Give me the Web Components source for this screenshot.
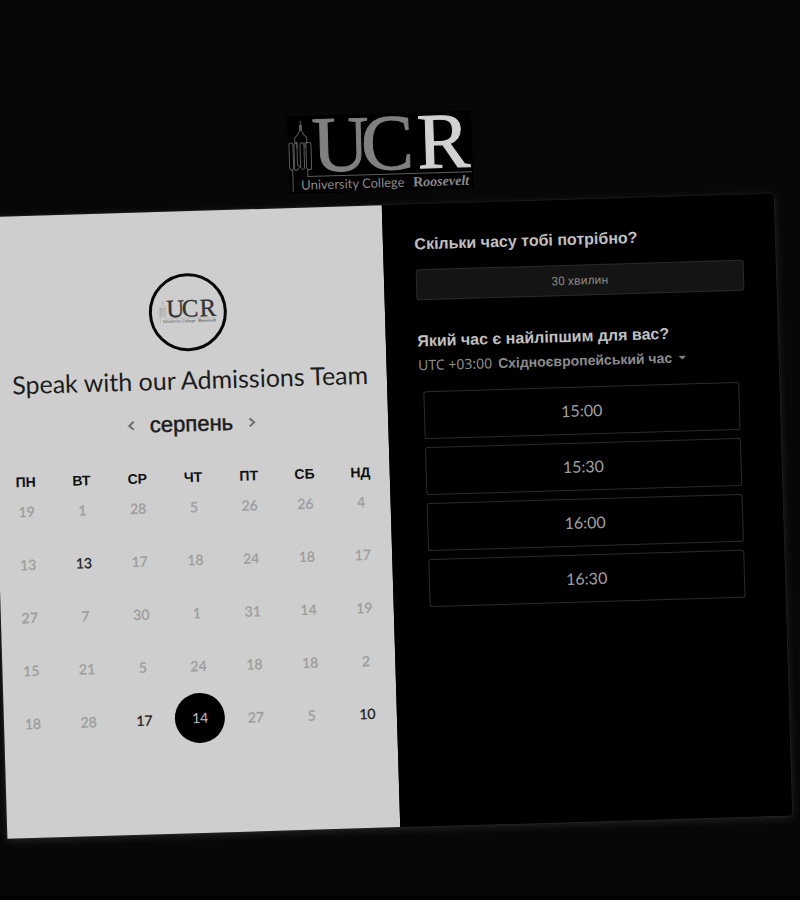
<!DOCTYPE html>
<html lang="uk">
<head>
<meta charset="utf-8">
<meta name="viewport" content="width=device-width, initial-scale=1">
<title>Speak with our Admissions Team</title>
<style>
html { background: #000; }
body { margin: 0; overflow-x: hidden; font-family: "Liberation Sans", sans-serif; }
</style>
</head>
<body>
<booking-page>
  <ucr-logo slot="brand"></ucr-logo>
  <date-panel heading="Speak with our Admissions Team" month="серпень"></date-panel>
  <time-panel></time-panel>
</booking-page>

<script>
const define = (name, html, setup) => customElements.define(name, class extends HTMLElement {
  constructor() {
    super();
    this.attachShadow({ mode: "open" }).innerHTML = html;
  }
  connectedCallback() { if (setup) setup(this, this.shadowRoot); }
});

define("ucr-logo", `
<style>
:host { display: block; width: 184px; --plate: #000; --uc: #808080; --r: #d2d2d2; --sub: #8a8a8a; --line: #5c5c5c; }
svg { display: block; width: 100%; overflow: visible; }
.serif { font-family: "Liberation Serif", serif; font-size: 79px; }
.sub { font-family: Lato, sans-serif; font-size: 13px; fill: var(--sub); }
.name { font-family: "Liberation Serif", serif; font-size: 14px; font-weight: 700; fill: var(--sub); }
</style>
<svg viewBox="0 -18 184 96" role="img" aria-label="University College Roosevelt">
  <rect width="184" height="78" fill="var(--plate)"/>
  <g fill="none" stroke="var(--line)" stroke-width="1">
    <path d="M13 5v10M12 9v6M14 9v6M12 15l-2 4-3 3v5h2v5M14 15l2 4 3 3v5h-2v5"/>
    <rect x="1" y="27" width="4" height="27" rx="2"/>
    <path d="M6 30q0-3 3-3v22l3 3v-22q0-3 2-3t2 3v21q0 4-3 2M6 30v24q2 2 4-2"/>
    <rect x="18" y="27" width="5" height="27" rx="2"/>
    <path d="M3 54l1 2v20M19 54v7h164"/>
  </g>
  <g class="serif">
    <text x="24" y="56" fill="var(--uc)" stroke="var(--uc)" stroke-width="1">U</text>
    <text x="73" y="56" fill="var(--uc)" stroke="var(--uc)" stroke-width="1">C</text>
    <text x="129" y="56" fill="var(--r)" stroke="var(--r)" stroke-width="1">R</text>
  </g>
  <text class="sub" x="12" y="74">University College</text>
  <text class="name" x="124" y="74">R<tspan font-style="italic">oosevelt</tspan></text>
</svg>`);

define("booking-page", `
<style>
:host { display: block; box-sizing: border-box; min-height: calc(100vh - 4px); background: #070707; overflow: hidden; }
.scene { padding: 95px 17px 60px 0; margin-left: -2px; transform: rotate(-1.7deg); transform-origin: 50% 516px; }
header { display: flex; justify-content: center; }
main { display: grid; grid-template-columns: 1fr 1fr; margin-top: 14px; background: #000;
  border-radius: 0 3px 3px 0; box-shadow: 0 2px 10px rgba(255,255,255,.13), 0 0 2px rgba(255,255,255,.13); }
</style>
<div class="scene">
  <header><slot name="brand"></slot></header>
  <main><slot></slot></main>
</div>`);

define("host-avatar", `
<style>
:host { display: flex; justify-content: center; box-sizing: border-box; padding-top: 17px;
  width: 78px; height: 78px; border: 3px solid #080808; border-radius: 50%; }
ucr-logo { width: 58px; --plate: none; --uc: #333; --r: #333; --sub: #555; --line: #888; }
</style>
<ucr-logo></ucr-logo>`);

define("date-panel", `
<style>
:host { display: flex; flex-direction: column; align-items: center; background: #cecece; color: #1c1c1c;
  padding: 62px 0 81px; min-width: 0; }
h1 { margin: 12px 0 17px; font: 400 25px/32px Lato, sans-serif; white-space: nowrap; }
nav { display: flex; align-items: center; gap: 11px; height: 24px; margin-bottom: 31px; }
h2 { margin: 0; font: 400 22px/24px "Liberation Sans", sans-serif; -webkit-text-stroke: 0.5px #1c1c1c; }
button { border: 0; padding: 0; background: none; color: inherit; cursor: pointer; }
nav button { display: grid; place-items: center; width: 16px; height: 24px; color: #707070; }
nav svg { width: 8px; height: 12px; fill: none; stroke: currentColor; stroke-width: 2; }
table { width: calc(100% - 2px); table-layout: fixed; border-collapse: collapse; }
th { height: 20px; padding: 0; font: 700 14px/20px "Liberation Sans", sans-serif; color: #101010; }
td { height: 53px; padding: 0; vertical-align: top; text-align: center; }
td button { display: block; width: 40px; height: 40px; margin: 0 auto; border-radius: 50%;
  font: 400 14px/20px Lato, sans-serif; color: #1c1c1c; -webkit-text-stroke: 0.3px currentColor; }
td button:disabled { color: #9c9c9c; cursor: default; }
td button[aria-pressed=true] { width: 50px; height: 50px; margin: -6px auto; background: #000; color: #bdbdbd; -webkit-text-stroke: 0; }
</style>
<host-avatar></host-avatar>
<h1></h1>
<nav aria-label="Місяць">
  <button type="button" aria-label="Попередній"><svg viewBox="0 0 8 12"><path d="M6.500 2L2 6l4.500 4"/></svg></button>
  <h2></h2>
  <button type="button" aria-label="Наступний"><svg viewBox="0 0 8 12"><path d="M1.500 2L6 6l-4.500 4"/></svg></button>
</nav>
<table><thead><tr></tr></thead><tbody></tbody></table>`,
(host, root) => {
  root.querySelector("h1").textContent = host.getAttribute("heading");
  root.querySelector("h2").textContent = host.getAttribute("month");
  root.querySelector("thead tr").innerHTML =
    ["ПН", "ВТ", "СР", "ЧТ", "ПТ", "СБ", "НД"].map(d => `<th scope="col">${d}</th>`).join("");
  /* "+" marks an open day, "*" the chosen one */
  const weeks = ["19 1 28 5 26 26 4", "13 13+ 17 18 24 18 17", "27 7 30 1 31 14 19", "15 21 5 24 18 18 2", "18 28 17+ 14* 27 5 10+"];
  root.querySelector("tbody").innerHTML = weeks.map(w => "<tr>" + w.split(" ").map(d => {
    const state = d.endsWith("*") ? 'aria-pressed="true"' : d.endsWith("+") ? "" : "disabled";
    return `<td><button type="button" ${state}>${parseInt(d)}</button></td>`;
  }).join("") + "</tr>").join("");
});

define("time-slot", `
<style>
:host { display: block; }
button { display: block; width: 100%; height: 48px; padding: 0; border: 1px solid #2b2b2b; border-radius: 3px;
  background: #000; color: #a0a0a0; font: 400 16px/24px Lato, sans-serif; cursor: pointer; }
</style>
<button type="button"><slot></slot></button>`);

define("time-panel", `
<style>
:host { display: block; background: #000; color: #c0c0c0; padding: 30px 32px 29px 32px; min-width: 0; border-radius: 0 3px 3px 0; }
h2 { margin: 0; font: 700 16px/20px "Liberation Sans", sans-serif; }
.duration { display: block; width: 100%; height: 31px; margin: 15px 0 31px; padding: 0; border: 1px solid #2b2b2b;
  border-radius: 3px; background: #141414; color: #858585; font: 400 12px/16px Roboto, sans-serif; }
.zone { display: flex; align-items: center; gap: 6px; height: 20px; margin: 4px 0 16px; color: #8c8c8c; }
label { font: 400 14px/20px "Noto Sans", sans-serif; }
.pick { display: flex; align-items: center; gap: 6px; }
select { appearance: none; field-sizing: content; border: 0; margin: 0; padding: 0; background: none; color: inherit;
  font: 700 14px/20px "Liberation Sans", sans-serif; }
svg { width: 8px; height: 4px; fill: #808080; }
.slots { display: grid; gap: 8px; padding: 0 8px 0 4px; }
</style>
<h2>Скільки часу тобі потрібно?</h2>
<button class="duration" type="button">30 хвилин</button>
<h2>Який час є найліпшим для вас?</h2>
<div class="zone">
  <label for="tz">UTC +03:00</label>
  <span class="pick"><select id="tz"><option>Східноєвропейський час</option></select><svg viewBox="0 0 8 4" aria-hidden="true"><path d="M0 0h8L4 4z"/></svg></span>
</div>
<div class="slots">
  <time-slot>15:00</time-slot><time-slot>15:30</time-slot><time-slot>16:00</time-slot><time-slot>16:30</time-slot>
</div>`);
</script>
</body>
</html>
